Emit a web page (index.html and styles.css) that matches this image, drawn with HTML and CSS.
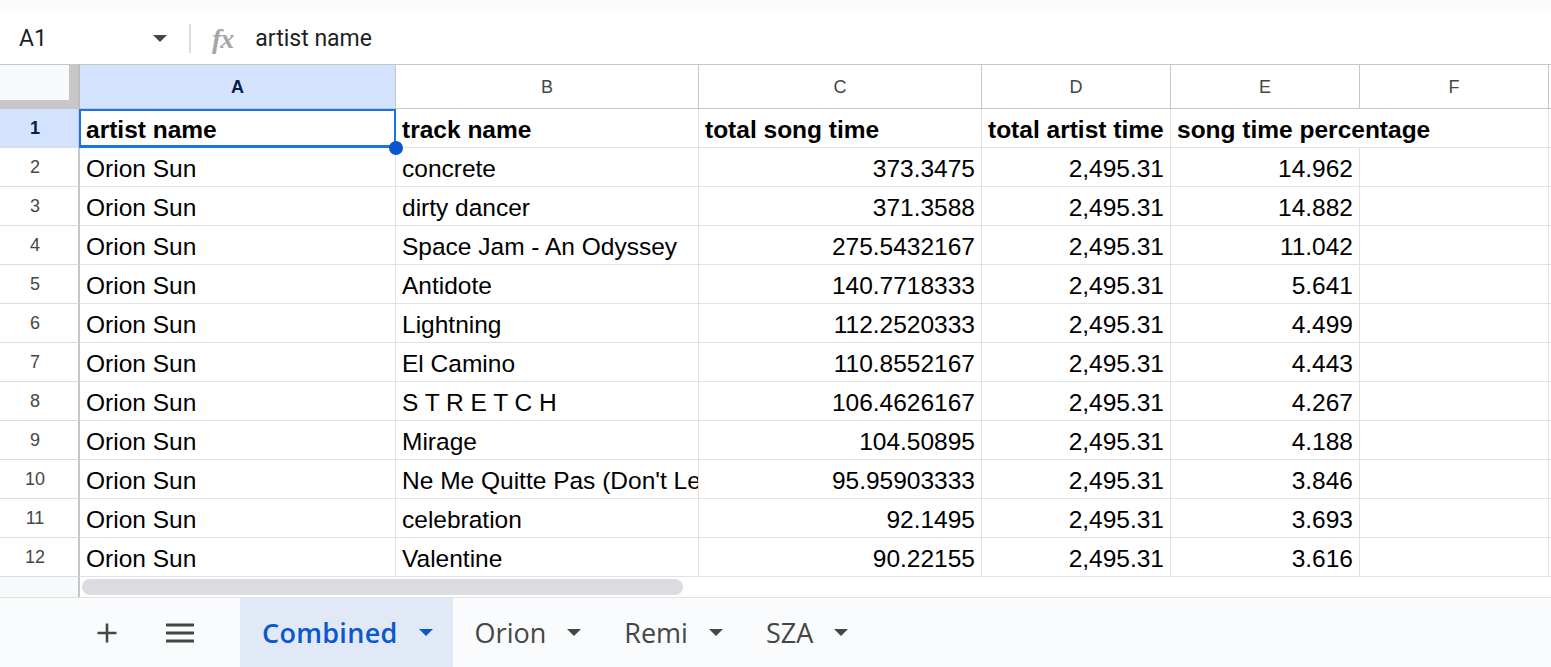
FILE: index.html
```html
<!DOCTYPE html>
<html>
<head>
<meta charset="utf-8">
<link rel="stylesheet" href="styles.css">
</head>
<body>
<div class="app">
  <div class="topband"></div>
  <div class="formula-bar">
    <div class="namebox"><span class="ref">A1</span><span class="caret"></span></div>
    <div class="divider"></div>
    <span class="fx">fx</span>
    <span class="formula">artist name</span>
  </div>

  <div class="grid">
    <div class="corner"><div class="corner-inner"></div></div>
    <div class="colh sel">A</div>
    <div class="colh">B</div>
    <div class="colh">C</div>
    <div class="colh">D</div>
    <div class="colh">E</div>
    <div class="colh">F</div>
    <div class="colh stub"></div>

    <div class="rowh sel">1</div>
    <div class="cell bold selected">artist name<span class="handle"></span></div>
    <div class="cell bold">track name</div>
    <div class="cell bold">total song time</div>
    <div class="cell bold">total artist time</div>
    <div class="cell bold spill">song time percentage</div>
    <div class="cell"></div>
    <div class="cell stub"></div>

    <div class="rowh">2</div><div class="cell">Orion Sun</div><div class="cell">concrete</div><div class="cell num">373.3475</div><div class="cell num">2,495.31</div><div class="cell num">14.962</div><div class="cell"></div><div class="cell stub"></div>
    <div class="rowh">3</div><div class="cell">Orion Sun</div><div class="cell">dirty dancer</div><div class="cell num">371.3588</div><div class="cell num">2,495.31</div><div class="cell num">14.882</div><div class="cell"></div><div class="cell stub"></div>
    <div class="rowh">4</div><div class="cell">Orion Sun</div><div class="cell">Space Jam - An Odyssey</div><div class="cell num">275.5432167</div><div class="cell num">2,495.31</div><div class="cell num">11.042</div><div class="cell"></div><div class="cell stub"></div>
    <div class="rowh">5</div><div class="cell">Orion Sun</div><div class="cell">Antidote</div><div class="cell num">140.7718333</div><div class="cell num">2,495.31</div><div class="cell num">5.641</div><div class="cell"></div><div class="cell stub"></div>
    <div class="rowh">6</div><div class="cell">Orion Sun</div><div class="cell">Lightning</div><div class="cell num">112.2520333</div><div class="cell num">2,495.31</div><div class="cell num">4.499</div><div class="cell"></div><div class="cell stub"></div>
    <div class="rowh">7</div><div class="cell">Orion Sun</div><div class="cell">El Camino</div><div class="cell num">110.8552167</div><div class="cell num">2,495.31</div><div class="cell num">4.443</div><div class="cell"></div><div class="cell stub"></div>
    <div class="rowh">8</div><div class="cell">Orion Sun</div><div class="cell">S T R E T C H</div><div class="cell num">106.4626167</div><div class="cell num">2,495.31</div><div class="cell num">4.267</div><div class="cell"></div><div class="cell stub"></div>
    <div class="rowh">9</div><div class="cell">Orion Sun</div><div class="cell">Mirage</div><div class="cell num">104.50895</div><div class="cell num">2,495.31</div><div class="cell num">4.188</div><div class="cell"></div><div class="cell stub"></div>
    <div class="rowh">10</div><div class="cell">Orion Sun</div><div class="cell">Ne Me Quitte Pas (Don't Leave Me)</div><div class="cell num">95.95903333</div><div class="cell num">2,495.31</div><div class="cell num">3.846</div><div class="cell"></div><div class="cell stub"></div>
    <div class="rowh">11</div><div class="cell">Orion Sun</div><div class="cell">celebration</div><div class="cell num">92.1495</div><div class="cell num">2,495.31</div><div class="cell num">3.693</div><div class="cell"></div><div class="cell stub"></div>
    <div class="rowh">12</div><div class="cell">Orion Sun</div><div class="cell">Valentine</div><div class="cell num">90.22155</div><div class="cell num">2,495.31</div><div class="cell num">3.616</div><div class="cell"></div><div class="cell stub"></div>
  </div>

  <div class="scroll-row">
    <div class="scroll-corner"></div>
    <div class="scroll-track"><div class="thumb"></div></div>
  </div>

  <div class="tabbar">
    <div class="icon-btn">
      <svg width="22" height="22" viewBox="0 0 22 22"><path d="M11 1.5v19M1.5 11h19" stroke="#444746" stroke-width="2.6" fill="none"/></svg>
    </div>
    <div class="icon-btn">
      <svg width="28" height="20" viewBox="0 0 28 20"><path d="M0 2h28M0 10h28M0 18h28" stroke="#444746" stroke-width="2.8" fill="none"/></svg>
    </div>
    <div class="tabs">
      <div class="tab active"><span>Combined</span><span class="tcaret"></span></div>
      <div class="tab"><span>Orion</span><span class="tcaret"></span></div>
      <div class="tab"><span>Remi</span><span class="tcaret"></span></div>
      <div class="tab"><span>SZA</span><span class="tcaret"></span></div>
    </div>
  </div>
</div>
</body>
</html>
```

FILE: styles.css
```css
* { box-sizing: border-box; }
html, body { margin: 0; padding: 0; }
body {
  width: 1551px;
  height: 667px;
  overflow: hidden;
  background: #ffffff;
  font-family: "Liberation Sans", Arial, sans-serif;
  color: #000;
}
.app { display: flex; flex-direction: column; height: 667px; }

.topband { height: 12px; background: #f9fbfd; }

.formula-bar {
  height: 53px;
  border-bottom: 1px solid #c4c7c5;
  display: flex;
  align-items: center;
  font-family: Roboto, "Liberation Sans", sans-serif;
  font-size: 23px;
  color: #1f1f1f;
}
.namebox {
  width: 189px;
  display: flex;
  align-items: center;
  padding-left: 19px;
}
.namebox .ref { flex: 1; }
.caret {
  width: 0; height: 0;
  border-left: 7px solid transparent;
  border-right: 7px solid transparent;
  border-top: 7px solid #444746;
  margin-right: 22px;
}
.divider { width: 2px; height: 29px; background: #dadce0; }
.fx {
  font-family: "Liberation Serif", "DejaVu Serif", serif;
  font-style: italic;
  font-weight: bold;
  font-size: 28px;
  color: #a6a6a6;
  margin-left: 21px;
  margin-right: 22px;
  letter-spacing: -1px;
  position: relative;
  top: 1px;
}

.grid {
  display: grid;
  grid-template-columns: 80px 316px 303px 283px 189px 189px 189px 2px;
  grid-template-rows: 44px repeat(12, 39px);
}
.corner {
  background: #c7c7c7;
  border-right: 2px solid #bdbdbd;
  border-bottom: 1px solid #c4c7c5;
}
.corner-inner { width: 69px; height: 35px; background: #f8f9fa; }

.colh {
  border-right: 1px solid #c4c7c5;
  border-bottom: 1px solid #c4c7c5;
  display: flex;
  align-items: center;
  justify-content: center;
  font-size: 18px;
  color: #444746;
  padding-top: 1px;
}
.colh.sel { background: #d3e3fd; color: #041e49; font-weight: bold; }
.colh.stub { border-right: none; }

.rowh {
  border-right: 2px solid #c4c7c5;
  border-bottom: 1px solid #dadce0;
  display: flex;
  align-items: center;
  justify-content: center;
  font-size: 18px;
  color: #444746;
  padding-right: 8px;
}
.rowh.sel { background: #d3e3fd; color: #041e49; font-weight: bold; }

.cell {
  border-right: 1px solid #e1e1e1;
  border-bottom: 1px solid #e1e1e1;
  display: flex;
  align-items: flex-end;
  padding: 0 6px 3px 6px;
  font-size: 24.5px;
  white-space: nowrap;
  overflow: hidden;
}
.cell.bold { font-weight: bold; }
.cell.num { justify-content: flex-end; }
.cell.stub { border-right: none; padding: 0; }
.cell.spill { overflow: visible; border-right-color: transparent; }
.cell.selected { position: relative; overflow: visible; }
.cell.selected::after {
  content: "";
  position: absolute;
  left: -1px; top: 0; right: -1px; bottom: -1px;
  border: 2px solid #1a73e8;
  border-bottom-width: 3px;
  pointer-events: none;
}
.handle {
  position: absolute;
  width: 14px; height: 14px;
  border-radius: 50%;
  background: #0b57d0;
  right: -8px; bottom: -8px;
  z-index: 2;
}

.scroll-row { height: 20px; display: flex; }
.scroll-corner { width: 80px; background: #f8f9fa; border-right: 2px solid #c4c7c5; }
.scroll-track { flex: 1; padding: 2px 0 1px 2px; }
.thumb { width: 601px; height: 16px; background: #dadce0; border-radius: 8px; }

.tabbar {
  height: 70px;
  background: #f9fbfd;
  border-top: 1px solid #e1e3e1;
  display: flex;
  align-items: stretch;
  padding-left: 87px;
}
.icon-btn {
  width: 40px;
  display: flex;
  align-items: center;
  justify-content: center;
  margin-right: 33px;
}
.icon-btn + .icon-btn { margin-right: 40px; }
.tabs { display: flex; }
.tab {
  display: flex;
  align-items: center;
  gap: 21px;
  padding: 0 21px 0 22px;
  font-family: "Open Sans", Roboto, sans-serif;
  font-size: 27px;
  font-weight: 500;
  color: #444746;
}
.tab.active {
  background: #e1e9f7;
  color: #0b57d0;
  font-weight: 600;
  letter-spacing: 0.3px;
  padding: 0 20px 0 22px;
}
.tcaret {
  width: 0; height: 0;
  border-left: 7px solid transparent;
  border-right: 7px solid transparent;
  border-top: 7px solid #444746;
}
.tab.active .tcaret { border-top-color: #0b57d0; }
```
